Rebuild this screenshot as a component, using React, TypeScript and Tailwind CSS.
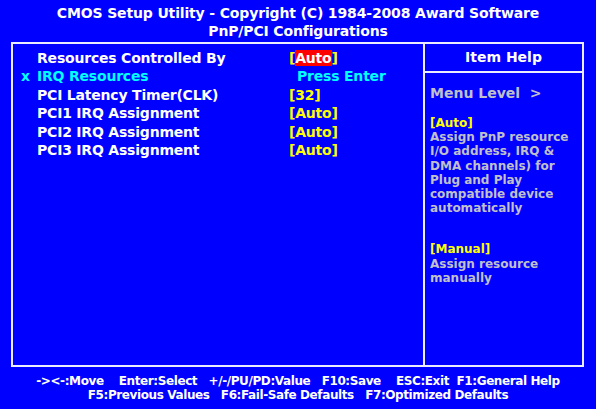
export default function App() {
    const items = [
        { mark: "", label: "Resources Controlled By", value: "Auto", kind: "selected" },
        { mark: "x", label: "IRQ Resources", value: "Press Enter", kind: "sub" },
        { mark: "", label: "PCI Latency Timer(CLK)", value: "32", kind: "normal" },
        { mark: "", label: "PCI1 IRQ Assignment", value: "Auto", kind: "normal" },
        { mark: "", label: "PCI2 IRQ Assignment", value: "Auto", kind: "normal" },
        { mark: "", label: "PCI3 IRQ Assignment", value: "Auto", kind: "normal" },
    ];

    return (
        <div className="w-[596px] h-[409px] bg-[#0000ff] text-white font-bold font-['DejaVu_Sans',sans-serif] overflow-hidden flex flex-col">
            <header className="pt-[4px] h-[42px] text-center text-[14px] leading-[18px] tracking-[-0.15px]">
                <div>CMOS Setup Utility - Copyright (C) 1984-2008 Award Software</div>
                <div>PnP/PCI Configurations</div>
            </header>

            <div className="ml-[11px] mr-[12px] h-[325px] border-2 border-[#ececff] flex">
                <div className="flex-1 pt-[5px] tracking-[-0.2px]">
                    {items.map((item) => (
                        <div
                            key={item.label}
                            className={`flex text-[14px] leading-[18.4px] ${item.kind === "sub" ? "text-[#00ffff]" : "text-white"}`}
                        >
                            <span className="w-[24px] pl-[8px]">{item.mark}</span>
                            <span className="w-[252px]">{item.label}</span>
                            {item.kind === "sub" ? (
                                <span className="pl-[8px]">{item.value}</span>
                            ) : (
                                <span className="text-[#ffff00]">
                                    [
                                    <span className={item.kind === "selected" ? "bg-[#ff0000] text-white" : ""}>
                                        {item.value}
                                    </span>
                                    ]
                                </span>
                            )}
                        </div>
                    ))}
                </div>

                <div className="w-[159px] border-l-2 border-[#ececff] flex flex-col">
                    <div className="h-[29px] border-b-2 border-[#ececff] flex items-center justify-center text-[14px]">
                        Item Help
                    </div>
                    <div className="px-[5px] text-[#c0c0c8]">
                        <div className="mt-[11px] text-[14px] leading-[18px]">Menu Level&nbsp; &gt;</div>
                        <div className="mt-[14px] text-[12px] leading-[14.2px]">
                            <div className="text-[#ffff00]">[Auto]</div>
                            <div>Assign PnP resource</div>
                            <div>I/O address, IRQ &amp;</div>
                            <div>DMA channels) for</div>
                            <div>Plug and Play</div>
                            <div>compatible device</div>
                            <div>automatically</div>
                            <div className="mt-[27px] text-[#ffff00]">[Manual]</div>
                            <div>Assign resource</div>
                            <div>manually</div>
                        </div>
                    </div>
                </div>
            </div>

            <footer className="pt-[8px] text-center text-[12px] leading-[13.5px] tracking-[-0.4px] whitespace-pre">
                <div>{"-><-:Move    Enter:Select   +/-/PU/PD:Value   F10:Save    ESC:Exit  F1:General Help"}</div>
                <div>{"F5:Previous Values   F6:Fail-Safe Defaults   F7:Optimized Defaults"}</div>
            </footer>
        </div>
    );
}
